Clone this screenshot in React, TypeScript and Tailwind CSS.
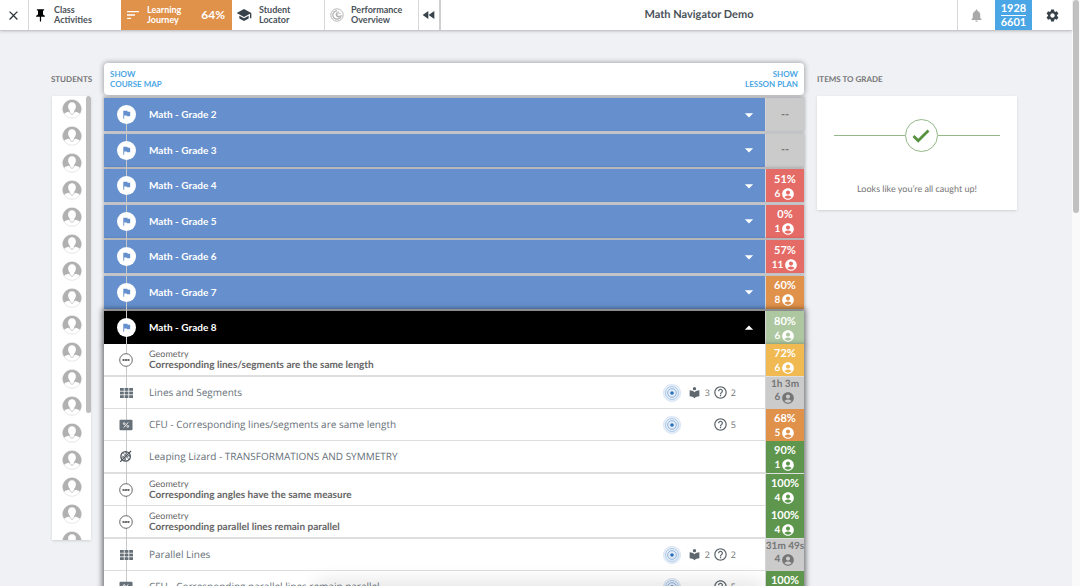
import React from "react";
import {
  MdAccountCircle,
  MdArrowDropDown,
  MdArrowDropUp,
  MdClose,
  MdFastRewind,
  MdFlag,
  MdHelpOutline,
  MdLocalLibrary,
  MdNotifications,
  MdPushPin,
  MdSchool,
  MdSettings,
  MdSort,
} from "react-icons/md";

type Tone = "none" | "red" | "orange" | "pale" | "yellow" | "grey" | "green";

const toneClass: Record<Tone, string> = {
  none: "bg-[#cbcbcb] text-[#757575]",
  red: "bg-[#e56b66] pt-0.5 text-white",
  orange: "bg-[#e0914a] pt-0.5 text-white",
  pale: "bg-[#adc8a0] pt-0.5 text-white",
  yellow: "bg-[#f0b952] pt-0.5 text-white",
  grey: "bg-[#cbcbcb] pb-1 text-[#757575]",
  green: "bg-[#5d964c] pt-0.5 text-white",
};

type Grade = { name: string; score: string; count?: number; tone: Tone; open?: boolean };

const grades: Grade[] = [
  { name: "Math - Grade 2", score: "--", tone: "none" },
  { name: "Math - Grade 3", score: "--", tone: "none" },
  { name: "Math - Grade 4", score: "51%", count: 6, tone: "red" },
  { name: "Math - Grade 5", score: "0%", count: 1, tone: "red" },
  { name: "Math - Grade 6", score: "57%", count: 11, tone: "red" },
  { name: "Math - Grade 7", score: "60%", count: 8, tone: "orange" },
  { name: "Math - Grade 8", score: "80%", count: 6, tone: "pale", open: true },
];

type Item = {
  kind: "topic" | "lesson" | "quiz" | "game";
  name: string;
  score: string;
  count: number;
  tone: Tone;
  target?: boolean;
  readings?: number;
  questions?: number;
};

const groups: Item[][] = [
  [{ kind: "topic", name: "Corresponding lines/segments are the same length", score: "72%", count: 6, tone: "yellow" }],
  [
    { kind: "lesson", name: "Lines and Segments", score: "1h 3m", count: 6, tone: "grey", target: true, readings: 3, questions: 2 },
    { kind: "quiz", name: "CFU - Corresponding lines/segments are same length", score: "68%", count: 5, tone: "orange", target: true, questions: 5 },
    { kind: "game", name: "Leaping Lizard - TRANSFORMATIONS AND SYMMETRY", score: "90%", count: 1, tone: "green" },
  ],
  [
    { kind: "topic", name: "Corresponding angles have the same measure", score: "100%", count: 4, tone: "green" },
    { kind: "topic", name: "Corresponding parallel lines remain parallel", score: "100%", count: 4, tone: "green" },
  ],
  [
    { kind: "lesson", name: "Parallel Lines", score: "31m 49s", count: 4, tone: "grey", target: true, readings: 2, questions: 2 },
    { kind: "quiz", name: "CFU - Corresponding parallel lines remain parallel", score: "100%", count: 4, tone: "green", target: true, questions: 5 },
  ],
];

function OverviewIcon() {
  return (
    <svg viewBox="0 0 14 14" className="size-3.5 shrink-0" fill="none" stroke="#b0b0b0" aria-hidden="true">
      <circle cx="7" cy="7" r="6.2" strokeWidth="0.9" />
      <path d="M7 2.8A4.2 4.2 0 1 0 11.2 7" strokeWidth="1.2" />
      <path d="M7 5A2 2 0 1 0 10 8.2H7Z" strokeWidth="1.1" fill="#c4c4c4" />
      <path d="M8.3 3v2.4h2.6" strokeWidth="0.7" />
    </svg>
  );
}

function Avatar() {
  return (
    <svg viewBox="0 0 20 20" className="size-5" aria-hidden="true">
      <circle cx="10" cy="10" r="9.3" fill="#fff" stroke="#dcdcdc" strokeWidth="0.7" />
      <path d="M10 .7a9.3 9.3 0 0 0-8 14.1c1.3-1.1 3-1.7 4.8-2l3.2 3.2 3.2-3.2c1.8.3 3.5.9 4.8 2A9.3 9.3 0 0 0 10 .7Z" fill="#b1b1b1" />
      <path d="M10 3.2c-2.4 0-3.9 1.7-3.9 4.1 0 1.7.6 3.3 1.7 4.3v1.4l2.2 2.3 2.2-2.3v-1.4c1.1-1 1.7-2.6 1.7-4.3 0-2.4-1.5-4.1-3.9-4.1Z" fill="#fff" />
    </svg>
  );
}

function TargetIcon() {
  return (
    <svg viewBox="0 0 20 20" className="size-5" fill="none" aria-hidden="true">
      <circle cx="10" cy="10" r="9" fill="#e6eef8" />
      <circle cx="10" cy="10" r="8.5" stroke="#d5e3f3" strokeWidth="0.7" />
      <circle cx="10" cy="10" r="6.5" stroke="#a9c6e7" strokeWidth="0.9" />
      <circle cx="10" cy="10" r="4.3" stroke="#86aedb" strokeWidth="0.9" />
      <circle cx="10" cy="10" r="2.6" fill="#e6eef8" />
      <circle cx="10" cy="10" r="1.8" fill="#2a6fbd" />
    </svg>
  );
}

function TopicIcon() {
  return (
    <svg viewBox="0 0 14 14" className="size-3.5" aria-hidden="true">
      <circle cx="7" cy="7" r="6.3" fill="#fff" stroke="#6a6a6a" strokeWidth="1" />
      <path d="M3.5 7h7" stroke="#5a5a5a" strokeWidth="1.8" />
      <path d="M5.6 6v2M8.4 6v2" stroke="#fff" strokeWidth="0.4" />
    </svg>
  );
}

function LessonIcon() {
  return (
    <svg viewBox="0 0 13 10" className="h-2.5 w-[13px]" fill="#667078" aria-hidden="true">
      {[0, 3.6, 7.2].map((y) =>
        [0, 4.6, 9.2].map((x) => <rect key={`${x}-${y}`} x={x} y={y} width="3.8" height="2.8" />),
      )}
    </svg>
  );
}

function QuizIcon() {
  return (
    <svg viewBox="0 0 14 12" className="h-3 w-3.5" aria-hidden="true">
      <rect x="0.5" y="0.8" width="13" height="10.4" rx="1" fill="#667078" />
      <g stroke="#fff" fill="none" strokeWidth="0.9">
        <path d="M9.2 3.4 4.8 8.6" />
        <circle cx="5.2" cy="4.6" r="0.9" />
        <circle cx="8.8" cy="7.4" r="0.9" />
      </g>
    </svg>
  );
}

function GameIcon() {
  return (
    <svg viewBox="0 0 14 14" className="size-3.5" fill="none" stroke="#4d565d" aria-hidden="true">
      <circle cx="6.6" cy="6.4" r="4.8" fill="#fff" strokeWidth="1.2" />
      <path d="M1.2 11.8 12 1" strokeWidth="1.2" />
      <path d="M2.2 7.6c2.4-.2 5-2.6 5.4-5.6M5.4 10.8c.2-2.4 2.6-5 5.6-5.4" strokeWidth="0.8" />
      <path d="M3.400 3.200c2.600.8 5.200 3.200 6.200 6.400M2.400 5.600c2 .8 4 3 4.600 5.200M6.400 2c1.200 1.800 2.800 3.600 4.600 4.600" strokeWidth="0.7" />
    </svg>
  );
}

function CheckIcon() {
  return (
    <svg viewBox="0 0 18 14" className="h-3.5 w-[18px]" fill="none" stroke="#56913f" strokeWidth="2.8" aria-hidden="true">
      <path d="m1.500 7 4.700 4.700L16.500 1.600" />
    </svg>
  );
}

const kindIcon: Record<Item["kind"], React.ReactNode> = {
  topic: <TopicIcon />,
  lesson: <LessonIcon />,
  quiz: <QuizIcon />,
  game: <GameIcon />,
};

function Score({ score, count, tone }: { score: string; count?: number; tone: Tone }) {
  const small = tone === "grey";
  return (
    <div className={`flex w-[39px] shrink-0 flex-col items-center justify-center self-stretch whitespace-nowrap border-l border-[#d5d5d5] font-bold ${toneClass[tone]}`}>
      <span className={small ? "text-[10px] leading-[13px]" : "text-[11px] leading-[14px]"}>{score}</span>
      {count !== undefined && (
        <span className={`flex items-center gap-px text-[10px] ${small ? "leading-[13px]" : "leading-[14px]"}`}>
          {count}
          <MdAccountCircle className="size-[14px]" />
        </span>
      )}
    </div>
  );
}

function GradeRow({ grade }: { grade: Grade }) {
  return (
    <div className={`flex h-[33px] items-center ${grade.open ? "bg-black shadow-[0_0_5px_2px_rgba(0,0,0,0.5)]" : "bg-[#658fcd] shadow-[0_0_3px_1px_rgba(0,0,0,0.25)]"}`}>
      <button type="button" aria-expanded={!!grade.open} className="flex h-full min-w-0 flex-1 items-center pr-1.5 pl-[13px] text-left text-[10px] font-bold text-white">
        <span className="relative z-20 mr-[13px] flex size-[19px] shrink-0 items-center justify-center rounded-full bg-white text-[#658fcd]">
          <MdFlag className="size-[11px]" />
        </span>
        <span className="flex-1 truncate">{grade.name}</span>
        {grade.open ? <MdArrowDropUp className="size-5" /> : <MdArrowDropDown className="size-5" />}
      </button>
      <Score {...grade} />
    </div>
  );
}

function ItemRow({ item }: { item: Item }) {
  return (
    <li className="flex h-8 items-center">
      <div className="flex h-full min-w-0 flex-1 items-center border-b border-[#dedede] pl-3">
        <span className="relative z-20 mr-[13px] flex w-5 shrink-0 justify-center">{kindIcon[item.kind]}</span>
        {item.kind === "topic" ? (
          <a href="#topic" className="min-w-0 flex-1 truncate text-[10px] leading-3 font-bold text-[#666]">
            <span className="block text-[9px] leading-[11px] font-normal">Geometry</span>
            {item.name}
          </a>
        ) : (
          <a href="#activity" className="min-w-0 flex-1 truncate font-['Open_Sans',sans-serif] text-[10px] text-[#667078]">
            {item.name}
          </a>
        )}
        <div className="grid w-[103px] shrink-0 grid-cols-[20px_28px_26px] items-center font-['Open_Sans',sans-serif] text-[9px] text-[#757575]">
          <span>{item.target && <TargetIcon />}</span>
          <span className="flex items-center justify-end gap-1">
            {item.readings !== undefined && (
              <>
                <MdLocalLibrary className="size-[13px] text-[#5f686e]" />
                {item.readings}
              </>
            )}
          </span>
          <span className="flex items-center justify-end gap-[3px]">
            {item.questions !== undefined && (
              <>
                <MdHelpOutline className="size-[15px] text-[#5f686e]" />
                {item.questions}
              </>
            )}
          </span>
        </div>
      </div>
      <Score {...item} />
    </li>
  );
}

function TopBar() {
  return (
    <header className="relative z-30 flex h-[31px] shrink-0 border-b border-[#c9c9cc] bg-white text-[9px] leading-[10px] font-bold text-[#4a525a] shadow-sm">
      <button type="button" aria-label="Close" className="flex w-[29px] items-center justify-center border-r border-[#d8d8d8] pr-0.5 text-[#2f363b]">
        <MdClose className="size-[15px]" />
      </button>
      <button type="button" className="flex w-[92px] items-center gap-1.5 pl-1 text-left">
        <MdPushPin className="size-[15px] text-black" />
        <span>Class<br />Activities</span>
      </button>
      <button type="button" className="flex w-[111px] items-center bg-[#e0914a] pr-[7px] pl-1 text-left text-white">
        <MdSort className="size-4" />
        <span className="ml-1.5 flex-1">Learning<br />Journey</span>
        <span className="text-xs">64%</span>
      </button>
      <button type="button" className="flex w-[93px] items-center gap-[7px] border-r border-[#d8d8d8] pl-1 text-left">
        <MdSchool className="size-4 text-[#37424a]" />
        <span>Student<br />Locator</span>
      </button>
      <button type="button" className="flex w-[94px] items-center gap-[7px] border-r border-[#d8d8d8] pl-[5px] text-left">
        <OverviewIcon />
        <span>Performance<br />Overview</span>
      </button>
      <button type="button" aria-label="Collapse navigation" className="flex w-[22px] items-center justify-center border-r-2 border-[#cfcfcf] text-[#37424a]">
        <MdFastRewind className="size-4" />
      </button>
      <h1 className="flex flex-1 items-center justify-center text-[11px] whitespace-nowrap">Math Navigator Demo</h1>
      <button type="button" aria-label="Notifications" className="flex w-[38px] items-center justify-center border-l border-[#d8d8d8] text-[#a9a9a9]">
        <MdNotifications className="size-[15px]" />
      </button>
      <div className="flex w-[37px] flex-col items-center justify-center bg-[#4aa6e5] text-[11px] leading-[13px] text-white">
        <span className="border-b border-white">1928</span>
        <span>6601</span>
      </div>
      <button type="button" aria-label="Settings" className="flex w-10 items-center justify-center text-[#37424a]">
        <MdSettings className="size-[15px]" />
      </button>
    </header>
  );
}

export default function App() {
  return (
    <div className="relative flex h-screen overflow-hidden bg-[#f0f1f5] font-[Lato,sans-serif] text-[#757575] [text-rendering:geometricPrecision]">
      <div className="flex min-w-0 flex-1 flex-col">
        <TopBar />
        <main className="flex min-h-0 flex-1 items-start gap-[13px] overflow-hidden pt-8 pr-[55px] pl-[52px]">
          <section className="w-[39px] shrink-0 pt-2">
            <h2 className="flex h-[25px] justify-center pt-0.5 text-[8px] leading-3 font-bold whitespace-nowrap">STUDENTS</h2>
            <div className="relative flex h-[444px] justify-center overflow-hidden bg-white pt-[3px] shadow-sm">
              <ul className="flex flex-col gap-[7px]">
                {Array.from({ length: 17 }, (_, i) => (
                  <li key={i} className="shrink-0">
                    <Avatar />
                  </li>
                ))}
              </ul>
              <div className="absolute top-0 right-0 h-[317px] w-[5px] rounded-full bg-[#bdbdbd]" />
            </div>
          </section>

          <section className="min-w-0 flex-1">
            <div className="flex h-8 items-center justify-between rounded-sm bg-white px-1.5 text-[8px] leading-[10px] font-bold text-[#4aa6e5] shadow-[0_0_5px_1px_rgba(0,0,0,0.3)]">
              <button type="button" className="text-left">SHOW<br />COURSE MAP</button>
              <button type="button" className="text-right">SHOW<br />LESSON PLAN</button>
            </div>
            <div className="relative mt-[3px]">
              <div className="absolute top-4 bottom-0 left-[22px] z-10 w-px bg-[#c8c8c8]" />
              <div className="flex h-[246px] flex-col justify-between">
                {grades.map((grade) => (
                  <GradeRow key={grade.name} grade={grade} />
                ))}
              </div>
              <div className="relative bg-white shadow-[0_3px_5px_2px_rgba(0,0,0,0.5)]">
                {groups.map((group, i) => (
                  <ul key={i} className="border-b border-[#dedede]">
                    {group.map((item) => (
                      <ItemRow key={item.name} item={item} />
                    ))}
                  </ul>
                ))}
              </div>
            </div>
          </section>

          <section className="w-[200px] shrink-0 pt-2">
            <h2 className="h-[25px] pt-0.5 text-[8px] leading-3 font-bold">ITEMS TO GRADE</h2>
            <div className="bg-white px-[17px] pt-[23px] pb-[15px] shadow-sm">
              <div className="flex items-center">
                <span className="h-px flex-[8] bg-[#94b888]" />
                <span className="flex size-[33px] items-center justify-center rounded-full border border-[#94b888]">
                  <CheckIcon />
                </span>
                <span className="h-px flex-[7] bg-[#94b888]" />
              </div>
              <p className="mt-[31px] text-center text-[9px] leading-3">Looks like you’re all caught up!</p>
            </div>
          </section>
        </main>
      </div>
      <div className="flex w-2 shrink-0 justify-center bg-[#fafafa]">
        <div className="h-[213px] w-1.5 rounded-full bg-[#c1c1c1]" />
      </div>
      <div className="pointer-events-none absolute right-80 -bottom-2 left-80 z-40 h-2 shadow-[0_0_18px_4px_rgba(0,0,0,0.12)]" />
    </div>
  );
}
